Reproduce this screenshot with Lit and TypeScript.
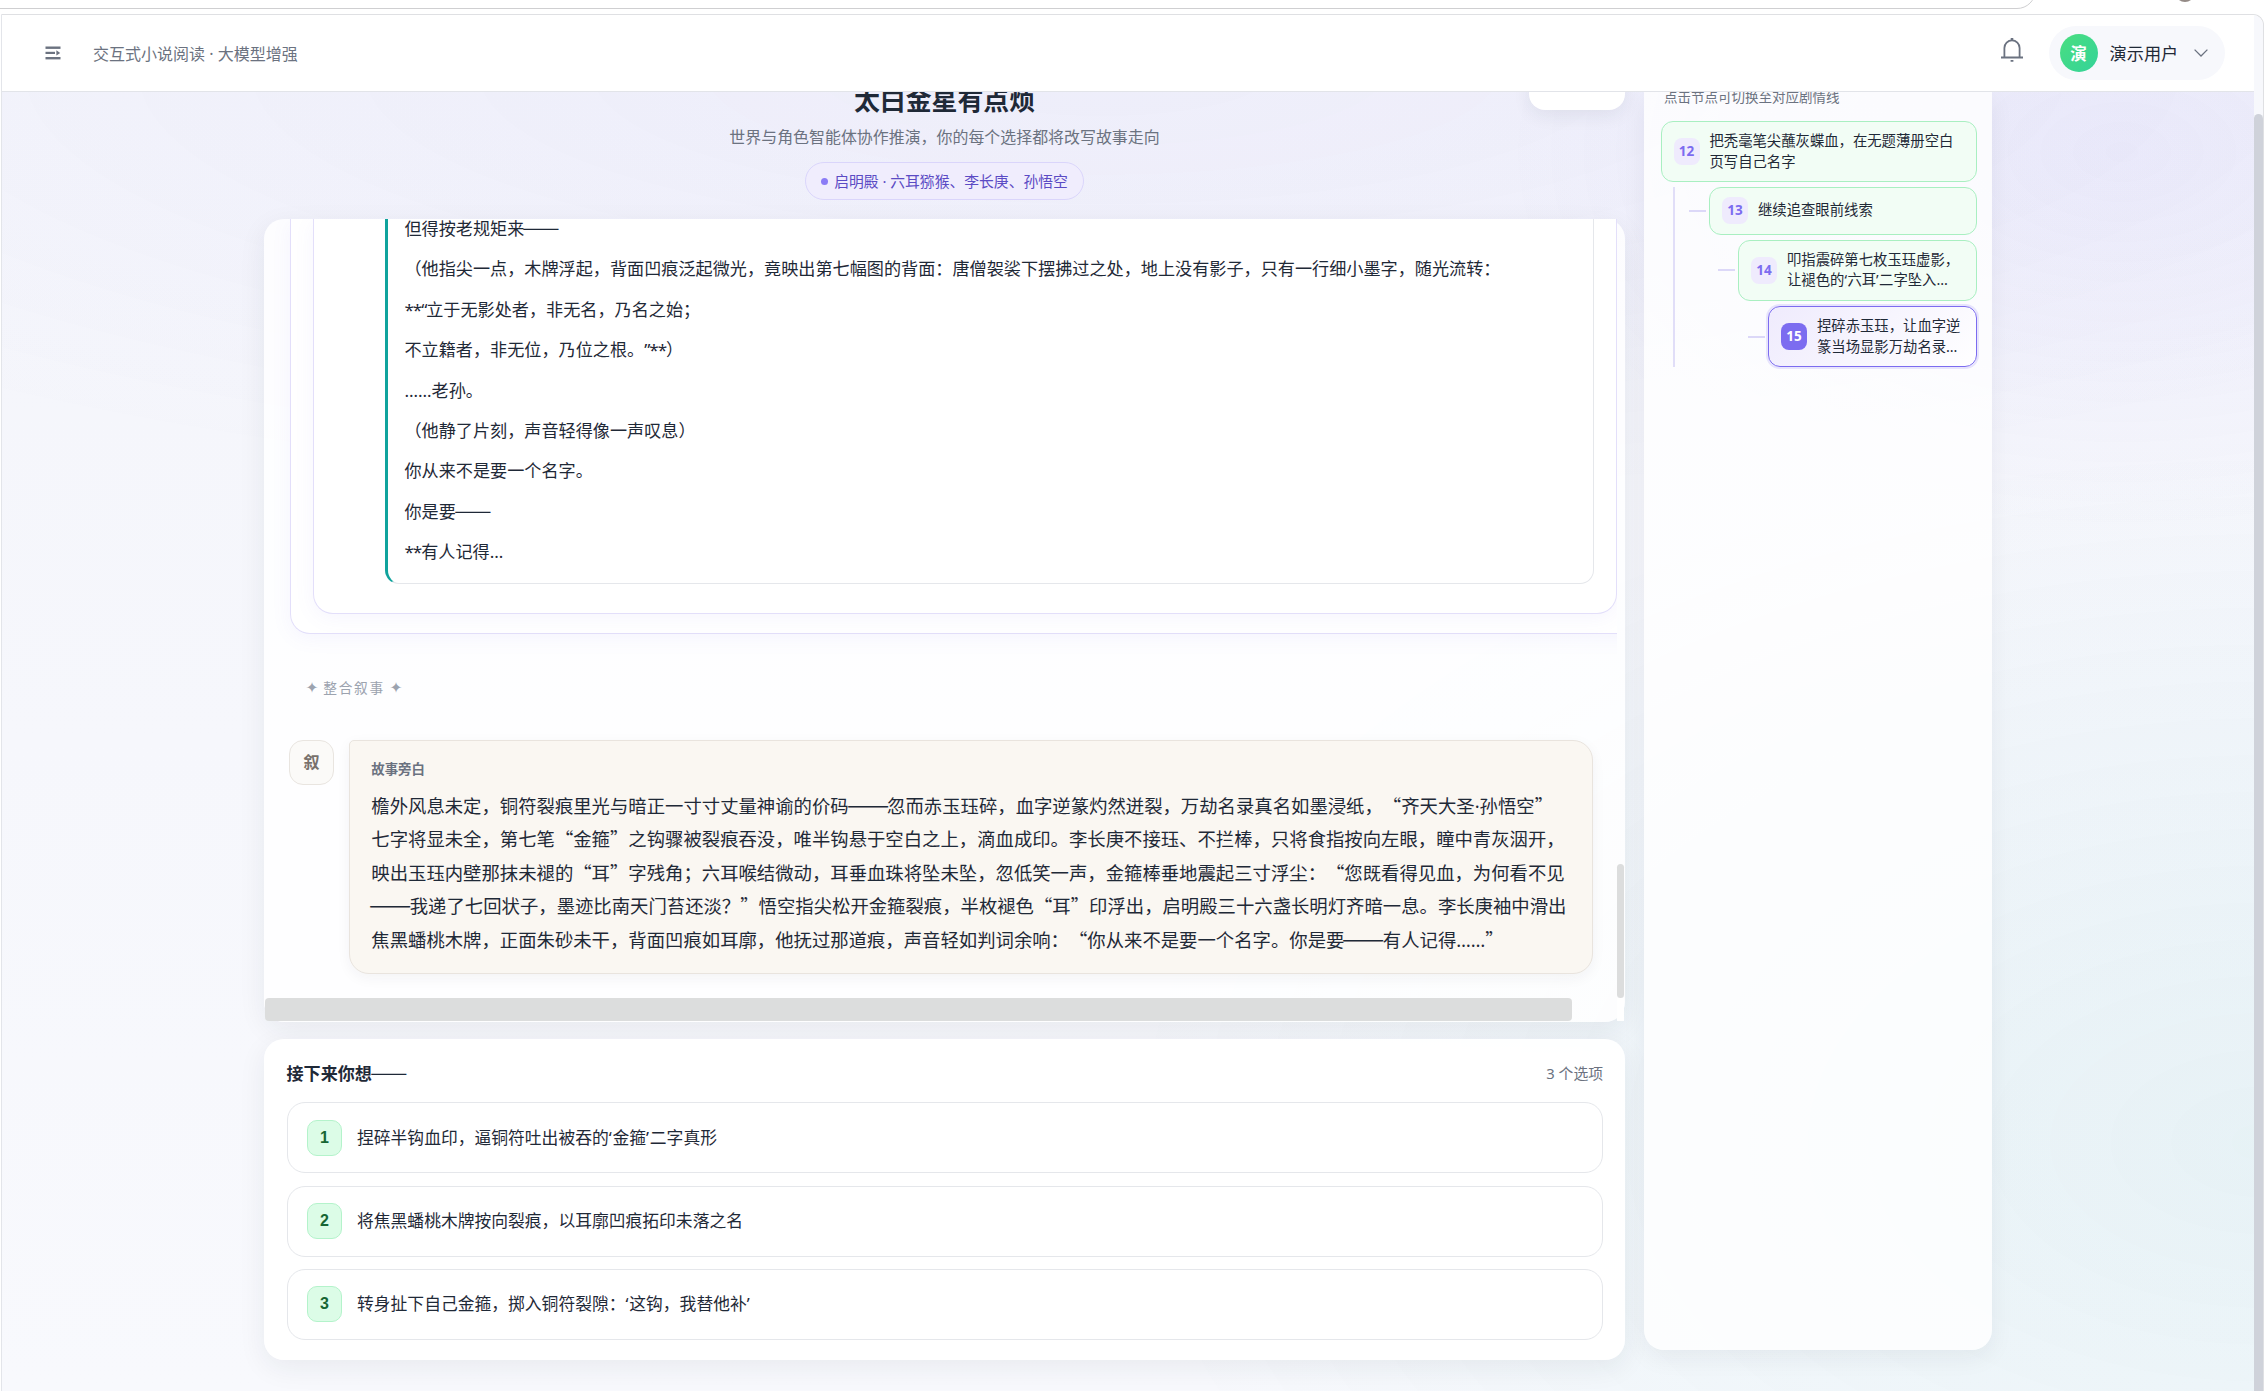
import { LitElement, html, css, svg } from "lit";
import { customElement } from "lit/decorators.js";

const STORY = [
  "但得按老规矩来——",
  "（他指尖一点，木牌浮起，背面凹痕泛起微光，竟映出第七幅图的背面：唐僧袈裟下摆拂过之处，地上没有影子，只有一行细小墨字，随光流转：",
  "**“立于无影处者，非无名，乃名之始；",
  "不立籍者，非无位，乃位之根。”**）",
  "……老孙。",
  "（他静了片刻，声音轻得像一声叹息）",
  "你从来不是要一个名字。",
  "你是要——",
  "**有人记得…",
];

const NARRATION = [
  "檐外风息未定，铜符裂痕里光与暗正一寸寸丈量神谕的价码——忽而赤玉珏碎，血字逆篆灼然迸裂，万劫名录真名如墨浸纸，“齐天大圣·孙悟空”",
  "七字将显未全，第七笔“金箍”之钩骤被裂痕吞没，唯半钩悬于空白之上，滴血成印。李长庚不接珏、不拦棒，只将食指按向左眼，瞳中青灰洇开，",
  "映出玉珏内壁那抹未褪的“耳”字残角；六耳喉结微动，耳垂血珠将坠未坠，忽低笑一声，金箍棒垂地震起三寸浮尘：“您既看得见血，为何看不见",
  "——我递了七回状子，墨迹比南天门苔还淡？”悟空指尖松开金箍裂痕，半枚褪色“耳”印浮出，启明殿三十六盏长明灯齐暗一息。李长庚袖中滑出",
  "焦黑蟠桃木牌，正面朱砂未干，背面凹痕如耳廓，他抚过那道痕，声音轻如判词余响：“你从来不是要一个名字。你是要——有人记得……”",
];

const CHOICES = [
  "捏碎半钩血印，逼铜符吐出被吞的‘金箍’二字真形",
  "将焦黑蟠桃木牌按向裂痕，以耳廓凹痕拓印未落之名",
  "转身扯下自己金箍，掷入铜符裂隙：‘这钩，我替他补’",
];

const NODES = [
  { n: 12, cls: "d0", lines: ["把秃毫笔尖蘸灰蝶血，在无题薄册空白", "页写自己名字"] },
  { n: 13, cls: "d1", lines: ["继续追查眼前线索"] },
  { n: 14, cls: "d2", lines: ["叩指震碎第七枚玉珏虚影，", "让褪色的‘六耳’二字坠入…"] },
  { n: 15, cls: "d3 active", lines: ["捏碎赤玉珏，让血字逆", "篆当场显影万劫名录…"] },
];

/** Sets the matched punctuation in the proportional Latin face, and dashes as one unbroken rule. */
const mixed = (text: string, pattern: RegExp) =>
  text.split(pattern).map((part, i) =>
    i % 2
      ? html`<span class=${part.startsWith("—") ? "dash" : part.includes("*") ? "lt stars" : "lt"}>${part}</span>`
      : part
  );

const NARROW = /([*“”‘’…·]+|——)/;
const NARRATOR = /([…·]+|——)/;

@customElement("story-tree")
export class StoryTree extends LitElement {
  static styles = css`
    :host { display: block; width: 348px; height: 1258px; text-spacing-trim: space-all; }
    .panel {
      box-sizing: border-box; height: 100%; padding: 0 15px 0 16px;
      border-radius: 0 0 20px 20px; background: rgba(255, 255, 255, 0.8);
      box-shadow: 0 8px 24px rgba(31, 41, 55, 0.06);
    }
    .hint { margin: 0 0 0 4px; height: 29px; overflow: hidden; }
    .hint span { display: block; margin-top: -7px; line-height: 22px; font-size: 13.5px; color: #6b7280; }
    .node { display: flex; align-items: center; justify-content: flex-end; margin-bottom: 5px; }
    .kids { border-left: 2px solid #e1def8; margin-left: 13px; }
    .kids .node:last-child { margin-bottom: 0; }
    .tick { width: 17px; height: 2px; background: #dcd8f8; margin-right: 3.5px; }
    .card {
      box-sizing: border-box; display: flex; align-items: center; gap: 10px;
      height: 61px; padding: 0 0 0 12px; border: 1px solid #a9efc1; border-radius: 12px;
      background: #f2fdf5; color: #1f2937; font-size: 14.35px; line-height: 20.6px; white-space: nowrap;
    }
    .card .text { margin-top: -2px; }
    .d0 .card { width: 316.5px; }
    .d1 .card { width: 268px; height: 47.5px; }
    .d2 .card { width: 239px; height: 61.5px; }
    .d3 .card { width: 209px; }
    .num {
      flex: none; width: 26px; height: 27px; line-height: 26px; border-radius: 8px; text-align: center;
      background: #efebfd; color: #7c6cf0; font-family: "Open Sans", sans-serif; font-size: 13.5px; font-weight: 700;
    }
    .active .card {
      border-color: #7c6cf0; background: linear-gradient(135deg, #efebfd, #ffffff);
      box-shadow: 0 0 0 2px rgba(124, 108, 240, 0.16);
    }
    .active .num { background: #7c6cf0; color: #fff; }
    .lt { font-family: "Noto Sans", sans-serif; line-height: 1; letter-spacing: 0.5px; }
  `;

  private node(n: (typeof NODES)[number], tick: boolean) {
    return html`<div class="node ${n.cls}">
      ${tick ? html`<i class="tick"></i>` : null}
      <div class="card">
        <span class="num">${n.n}</span>
        <span class="text">${n.lines.map((l, i) => html`${i ? html`<br />` : null}${mixed(l, NARROW)}`)}</span>
      </div>
    </div>`;
  }

  render() {
    return html`<div class="panel">
      <div class="hint"><span>点击节点可切换至对应剧情线</span></div>
      ${this.node(NODES[0], false)}
      <div class="kids">${NODES.slice(1).map((n) => this.node(n, true))}</div>
    </div>`;
  }
}

@customElement("app-root")
export class AppRoot extends LitElement {
  static styles = css`
    :host {
      display: block; width: 2267px; height: 1391px; overflow: hidden; background: #fff;
      font-family: "Noto Sans CJK SC", "Noto Sans", sans-serif; color: #1f2937; text-spacing-trim: space-all;
    }
    .lt { font-family: "Noto Sans", sans-serif; line-height: 1; }
    .stars { letter-spacing: -1.1px; }
    .dash { display: inline-block; font-size: 1.18em; line-height: 1; transform: scaleX(1.1); }

    .browser { height: 14px; box-sizing: border-box; position: relative; overflow: hidden; }
    .omnibox {
      position: absolute; left: -40px; bottom: 5px; width: 2076px; height: 38px; box-sizing: border-box;
      border: 1px solid #cfcfd1; border-bottom-width: 1.5px; border-radius: 20px;
    }
    .profile { position: absolute; left: 2175px; top: -18px; width: 20px; height: 20px; border-radius: 50%; background: #948a86; }

    .window {
      box-sizing: border-box; width: 2263.5px; height: 1377px; margin-left: 0.5px; display: grid; grid-template-columns: 1fr 9px;
      border: 1px solid #dfe0e3; border-left-color: #e3e5ea; border-bottom: 0;
      border-radius: 0 11px 0 0; overflow: hidden;
    }
    .track { background: #f7f8fc; padding-top: 99px; }
    .thumb { height: 1400px; background: #cfd2da; border-radius: 5px 5px 0 0; }

    .page { display: flex; flex-direction: column; height: 1376px; overflow: hidden; }
    header {
      flex: none; box-sizing: border-box; height: 77px; padding: 0 29.5px 0 43px; display: flex; align-items: center;
      background: #fff; border-bottom: 1px solid #e2e4e9;
    }
    .menu { width: 16px; height: 14px; margin-right: 32.5px; }
    .crumb { flex: 1; font-size: 16px; color: #6b7280; line-height: 24px; }
    .bell { width: 24px; height: 26px; margin: -6px 25px 0 0; }
    .user {
      box-sizing: border-box; width: 175.5px; height: 54px; padding: 0 17px 0 10.5px; display: flex; align-items: center;
      border-radius: 27px; background: #f7f8fc; font-size: 17.2px; line-height: 26px; white-space: nowrap;
    }
    .avatar {
      width: 38px; height: 38px; line-height: 38px; margin-right: 12px; border-radius: 50%; text-align: center; color: #fff;
      font-weight: 700; font-size: 16.5px; background: linear-gradient(135deg, #4ade80, #34d399);
    }
    .name { flex: 1; color: #1f2937; }
    .chev { width: 14px; height: 8px; }

    .body {
      flex: 1; overflow: hidden; display: flex; gap: 19px; padding-left: 262.5px; align-items: flex-start;
      background:
        radial-gradient(ellipse 620px 380px at 2120px 60px, rgba(124, 108, 240, 0.075), transparent),
        radial-gradient(ellipse 1700px 440px at 1100px -20px, rgba(124, 108, 240, 0.06), transparent),
        radial-gradient(ellipse 1150px 700px at 2260px 1050px, rgba(20, 165, 160, 0.075), transparent),
        linear-gradient(180deg, #f4f5fb, #f8f9fd);
    }
    .main { width: 1361px; display: flex; flex-direction: column; }

    .hero { position: relative; height: 127px; display: flex; flex-direction: column; align-items: center; }
    h1 { margin: -11px 0 0; font-size: 25.9px; line-height: 36px; font-weight: 700; }
    .sub { margin: 7px 0 14px; font-size: 15.95px; line-height: 24px; color: #6b7280; }
    .where {
      box-sizing: border-box; width: 279px; height: 38px; display: flex; align-items: center; justify-content: center; gap: 6px;
      border: 1px solid #dad5fb; border-radius: 19px; background: #f0edfd; color: #5b4bc4; font-size: 14.8px; line-height: 22px; white-space: nowrap;
    }
    .dot { width: 7px; height: 7px; border-radius: 50%; background: #8b7cf6; }
    .action {
      position: absolute; right: 0.5px; top: -22px; width: 96px; height: 40px; border-radius: 16px; background: #fff;
      box-shadow: 0 6px 18px rgba(31, 41, 55, 0.07); text-align: center; font-size: 14px; line-height: 29px; color: #6b7280;
    }

    .reader {
      height: 803px; display: grid; grid-template-columns: 1353px 7px; grid-template-rows: 779px 23px;
      border-radius: 20px; background: rgba(255, 255, 255, 0.82); box-shadow: 0 8px 28px rgba(31, 41, 55, 0.07);
    }
    .pane { overflow: hidden; border-top-left-radius: 20px; }
    .outer {
      box-sizing: border-box; width: 1380px; height: 415px; margin-left: 25.5px; padding: 0 0 0 22px;
      border: 1px solid #e3dffa; border-top: 0; border-radius: 0 0 0 20px; background: rgba(255, 255, 255, 0.7);
      box-shadow: 0 4px 20px rgba(124, 108, 240, 0.07);
    }
    .inner {
      box-sizing: border-box; width: 1304px; height: 395px; padding: 0 22px 0 71.5px;
      border: 1px solid #e3dffa; border-top: 0; border-radius: 0 0 20px 20px; background: #fff;
      box-shadow: 0 4px 20px rgba(124, 108, 240, 0.07);
    }
    .speech {
      box-sizing: border-box; height: 365px; padding-left: 16.5px; overflow: hidden;
      border: 1px solid #e5e7eb; border-left: 3px solid #10a39d; border-top: 0; border-radius: 0 0 14px 14px;
    }
    .speech p { margin: 0; height: 40.4px; font-size: 17.14px; line-height: 40.4px; white-space: nowrap; }
    .speech p:first-child { margin-top: -11px; }
    .divider { height: 24px; margin: 41px 0 0 41.5px; line-height: 24px; font-size: 13.7px; letter-spacing: 1.7px; color: #9ca3af; white-space: nowrap; }
    .divider .star { font-family: "DejaVu Sans", sans-serif; font-size: 15.5px; line-height: 1; letter-spacing: 0; }
    .narrator { display: flex; gap: 15px; margin: 41px 24px 0 25px; align-items: flex-start; }
    .face {
      box-sizing: border-box; width: 45px; height: 45px; line-height: 40px; text-align: center; border: 1px solid #e9e5e0;
      border-radius: 14px; background: #fbfaf8; color: #78716c; font-size: 16px; font-weight: 700;
    }
    .tale {
      box-sizing: border-box; flex: 1; height: 234px; padding: 16px 0 0 21.3px; border: 1px solid #e9e4de;
      border-radius: 5px 20px 20px 20px; background: #faf7f2; box-shadow: 0 4px 14px rgba(31, 41, 55, 0.05);
    }
    .who { font-size: 13.4px; font-weight: 600; line-height: 22px; color: #6b7280; margin-bottom: 10px; }
    .tale p { margin: 0; height: 33.4px; font-size: 18.36px; line-height: 33.4px; white-space: nowrap; }
    .tale .dash { font-size: 1.25em; }
    .vbar { padding-top: 645px; }
    .vbar i { display: block; height: 134px; border-radius: 4px; background: #dcdddd; }
    .hbar { width: 1307px; margin-left: 1px; border-radius: 4px; background: #dcdddd; }
    .corner { background: #fff; }

    .choices {
      box-sizing: border-box; margin-top: 17px; height: 321px; padding: 20px 22px 0 22.5px; border-radius: 20px;
      background: rgba(255, 255, 255, 0.94); box-shadow: 0 8px 28px rgba(31, 41, 55, 0.07);
    }
    .head { display: flex; justify-content: space-between; align-items: center; height: 27px; margin-bottom: 16.3px; }
    .head b { font-size: 17.1px; }
    .head .dash { font-weight: 400; }
    .head em { font-style: normal; font-size: 14.8px; color: #6b7280; }
    .choice {
      box-sizing: border-box; height: 71px; margin-bottom: 12.3px; padding-left: 19.5px; display: flex; align-items: center; gap: 15px;
      border: 1px solid #e5e7eb; border-radius: 18px; background: #fff; font-size: 16.8px; line-height: 26px;
    }
    .choice .text { margin-top: -2px; }
    .choice .lt { letter-spacing: 0.8px; }
    .idx {
      box-sizing: border-box; width: 35px; height: 36px; text-align: center; border: 1px solid #b4f3cb;
      border-radius: 10px; background: #dcfce7; color: #166534; font: 700 16px/34px "Liberation Sans", sans-serif;
    }
    story-tree { flex: none; }
  `;

  render() {
    return html`
      <div class="browser"><div class="omnibox"></div><div class="profile"></div></div>
      <div class="window">
        <div class="page">
          <header>
            <svg class="menu" viewBox="0 0 16 14" fill="#6b7280">
              ${svg`<rect x="0.5" y="0.5" width="15" height="2.4"/><rect x="0.5" y="5.8" width="9.5" height="2.2"/><path d="M11.4 4.2l3.8 2.7-3.8 2.7z"/><rect x="0.5" y="11" width="15" height="2.4"/>`}
            </svg>
            <div class="crumb">交互式小说阅读<span class="lt"> · </span>大模型增强</div>
            <svg class="bell" viewBox="0 0 24 26" fill="none" stroke="#6b7280" stroke-width="1.8">
              ${svg`<path d="M4.4 20.5V11a7.6 7.6 0 0 1 15.2 0v9.5"/><path d="M1 20.5h22"/><path d="M12 1v2.4" stroke-width="2.6"/><path d="M10.6 23.8h2.8"/>`}
            </svg>
            <div class="user">
              <span class="avatar">演</span><span class="name">演示用户</span>
              <svg class="chev" viewBox="0 0 14 8" fill="none" stroke="#6b7280" stroke-width="1.3">${svg`<path d="M.6.6L7 7 13.4.6"/>`}</svg>
            </div>
          </header>
          <div class="body">
            <div class="main">
              <div class="hero">
                <h1>太白金星有点烦</h1>
                <div class="sub">世界与角色智能体协作推演，你的每个选择都将改写故事走向</div>
                <div class="where"><i class="dot"></i><span>启明殿<span class="lt"> · </span>六耳猕猴、李长庚、孙悟空</span></div>
                <div class="action">刷新</div>
              </div>
              <section class="reader">
                <div class="pane">
                  <div class="outer"><div class="inner"><div class="speech">
                    ${STORY.map((t) => html`<p>${mixed(t, NARROW)}</p>`)}
                  </div></div></div>
                  <div class="divider"><span class="star">✦</span> 整合叙事 <span class="star">✦</span></div>
                  <div class="narrator">
                    <div class="face">叙</div>
                    <div class="tale">
                      <div class="who">故事旁白</div>
                      ${NARRATION.map((t) => html`<p>${mixed(t, NARRATOR)}</p>`)}
                    </div>
                  </div>
                </div>
                <div class="vbar"><i></i></div>
                <div class="hbar"></div>
                <div class="corner"></div>
              </section>
              <section class="choices">
                <div class="head"><b>${mixed("接下来你想——", NARROW)}</b><em><span class="lt">3 </span>个选项</em></div>
                ${CHOICES.map((c, i) => html`<div class="choice"><span class="idx">${i + 1}</span><span class="text">${mixed(c, NARROW)}</span></div>`)}
              </section>
            </div>
            <story-tree></story-tree>
          </div>
        </div>
        <div class="track"><div class="thumb"></div></div>
      </div>
    `;
  }
}
